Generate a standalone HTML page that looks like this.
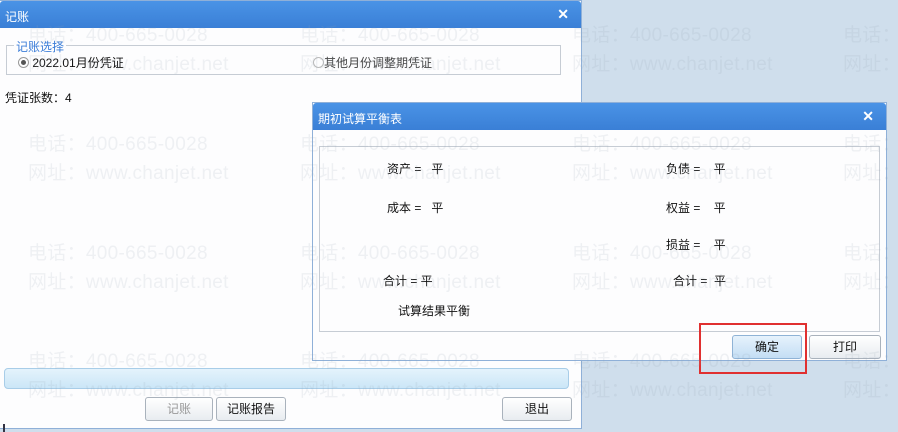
<!DOCTYPE html>
<html><head><meta charset="utf-8"><style>
*{margin:0;padding:0;box-sizing:border-box}
body{width:898px;height:432px;overflow:hidden;background:#cfdeec;font-family:"Liberation Sans","Noto Sans CJK SC",sans-serif;font-size:12px;color:#111;position:relative}
.abs{position:absolute}
.win{position:absolute;background:#fdfdfe;border:1px solid #8fb0d8}
.tb{position:absolute;left:0;right:0;top:0;height:27px;background:linear-gradient(#4a93e6,#3a7fd6);color:#fff;padding:7px 5px;font-size:12px;border-radius:3px 3px 0 0}
.x{position:absolute;right:12px;top:5px;color:#fff;font-weight:bold;font-size:14px}
.btn{position:absolute;height:24px;border:1px solid #a9b2bc;border-radius:3px;background:linear-gradient(#fff,#e8ecf0);text-align:center;line-height:22px;font-size:12px}
.wm{position:absolute;color:rgba(150,160,175,0.14);font-size:19px;letter-spacing:0.3px;font-family:"Liberation Sans","Noto Sans CJK SC",sans-serif;white-space:nowrap;z-index:10;pointer-events:none}
</style></head><body>

<div class="win" style="left:0;top:0;width:582px;height:429px;border-left:none">
 <div class="tb">记账<span class="x">✕</span></div>
 <div class="abs" style="left:6px;top:44px;width:555px;height:30px;border:1px solid #c6ccd4"></div>
 <div class="abs" style="left:14px;top:37px;background:#fdfdfe;color:#3b7dd8;padding:0 2px">记账选择</div>
 <div class="abs" style="left:18px;top:53px;font-size:12px"><span style="display:inline-block;width:11px;height:11px;border:1px solid #999;border-radius:50%;vertical-align:-1px;position:relative"><span style="position:absolute;left:2px;top:2px;width:5px;height:5px;border-radius:50%;background:#555"></span></span> 2022.01月份凭证</div>
 <div class="abs" style="left:313px;top:53px;color:#444"><span style="display:inline-block;width:11px;height:11px;border:1px solid #bbb;border-radius:50%;vertical-align:-1px"></span>其他月份调整期凭证</div>
 <div class="abs" style="left:5px;top:88px">凭证张数：4</div>
 <div class="abs" style="left:4px;top:367px;width:565px;height:21px;border:1px solid #a8cde8;border-radius:4px;background:linear-gradient(#e4f3fc,#cbe6f7)"></div>
 <div class="btn" style="left:145px;top:396px;width:68px;color:#999">记账</div>
 <div class="btn" style="left:216px;top:396px;width:70px">记账报告</div>
 <div class="btn" style="left:502px;top:396px;width:70px">退出</div>
</div>
<div class="abs" style="left:3px;top:424px;width:2px;height:8px;background:#334"></div>

<div class="win" style="left:312px;top:102px;width:575px;height:259px">
 <div class="tb">期初试算平衡表<span class="x">✕</span></div>
 <div class="abs" style="left:6px;top:43px;width:561px;height:186px;border:1px solid #c6ccd4"></div>
 <div class="abs" style="left:74px;top:57px">资产 =&nbsp;&nbsp;&nbsp;平</div>
 <div class="abs" style="left:74px;top:96px">成本 =&nbsp;&nbsp;&nbsp;平</div>
 <div class="abs" style="left:70px;top:169px">合计 = 平</div>
 <div class="abs" style="left:85px;top:199px">试算结果平衡</div>
 <div class="abs" style="left:353px;top:57px">负债 =&nbsp;&nbsp;&nbsp;&nbsp;平</div>
 <div class="abs" style="left:353px;top:96px">权益 =&nbsp;&nbsp;&nbsp;&nbsp;平</div>
 <div class="abs" style="left:353px;top:133px">损益 =&nbsp;&nbsp;&nbsp;&nbsp;平</div>
 <div class="abs" style="left:360px;top:169px">合计 =&nbsp;&nbsp;平</div>
 <div class="btn" style="left:419px;top:232px;width:70px;background:linear-gradient(#e6f2fc,#c4def4);border-color:#8fb3d6">确定</div>
 <div class="btn" style="left:496px;top:232px;width:72px">打印</div>
</div>
<div class="abs" style="left:699px;top:323px;width:108px;height:51px;border:2px solid #e03030"></div>

<div class="wm" style="left:28px;top:20px">电话：400-665-0028</div>
<div class="wm" style="left:300px;top:20px">电话：400-665-0028</div>
<div class="wm" style="left:572px;top:20px">电话：400-665-0028</div>
<div class="wm" style="left:843px;top:20px">电话：</div>
<div class="wm" style="left:28px;top:49px">网址：www.chanjet.net</div>
<div class="wm" style="left:300px;top:49px">网址：www.chanjet.net</div>
<div class="wm" style="left:572px;top:49px">网址：www.chanjet.net</div>
<div class="wm" style="left:843px;top:49px">网址：</div>
<div class="wm" style="left:28px;top:129px">电话：400-665-0028</div>
<div class="wm" style="left:300px;top:129px">电话：400-665-0028</div>
<div class="wm" style="left:572px;top:129px">电话：400-665-0028</div>
<div class="wm" style="left:843px;top:129px">电话：</div>
<div class="wm" style="left:28px;top:158px">网址：www.chanjet.net</div>
<div class="wm" style="left:300px;top:158px">网址：www.chanjet.net</div>
<div class="wm" style="left:572px;top:158px">网址：www.chanjet.net</div>
<div class="wm" style="left:843px;top:158px">网址：</div>
<div class="wm" style="left:28px;top:238px">电话：400-665-0028</div>
<div class="wm" style="left:300px;top:238px">电话：400-665-0028</div>
<div class="wm" style="left:572px;top:238px">电话：400-665-0028</div>
<div class="wm" style="left:843px;top:238px">电话：</div>
<div class="wm" style="left:28px;top:267px">网址：www.chanjet.net</div>
<div class="wm" style="left:300px;top:267px">网址：www.chanjet.net</div>
<div class="wm" style="left:572px;top:267px">网址：www.chanjet.net</div>
<div class="wm" style="left:843px;top:267px">网址：</div>
<div class="wm" style="left:28px;top:346px">电话：400-665-0028</div>
<div class="wm" style="left:300px;top:346px">电话：400-665-0028</div>
<div class="wm" style="left:572px;top:346px">电话：400-665-0028</div>
<div class="wm" style="left:843px;top:346px">电话：</div>
<div class="wm" style="left:28px;top:375px">网址：www.chanjet.net</div>
<div class="wm" style="left:300px;top:375px">网址：www.chanjet.net</div>
<div class="wm" style="left:572px;top:375px">网址：www.chanjet.net</div>
<div class="wm" style="left:843px;top:375px">网址：</div>
</body></html>
